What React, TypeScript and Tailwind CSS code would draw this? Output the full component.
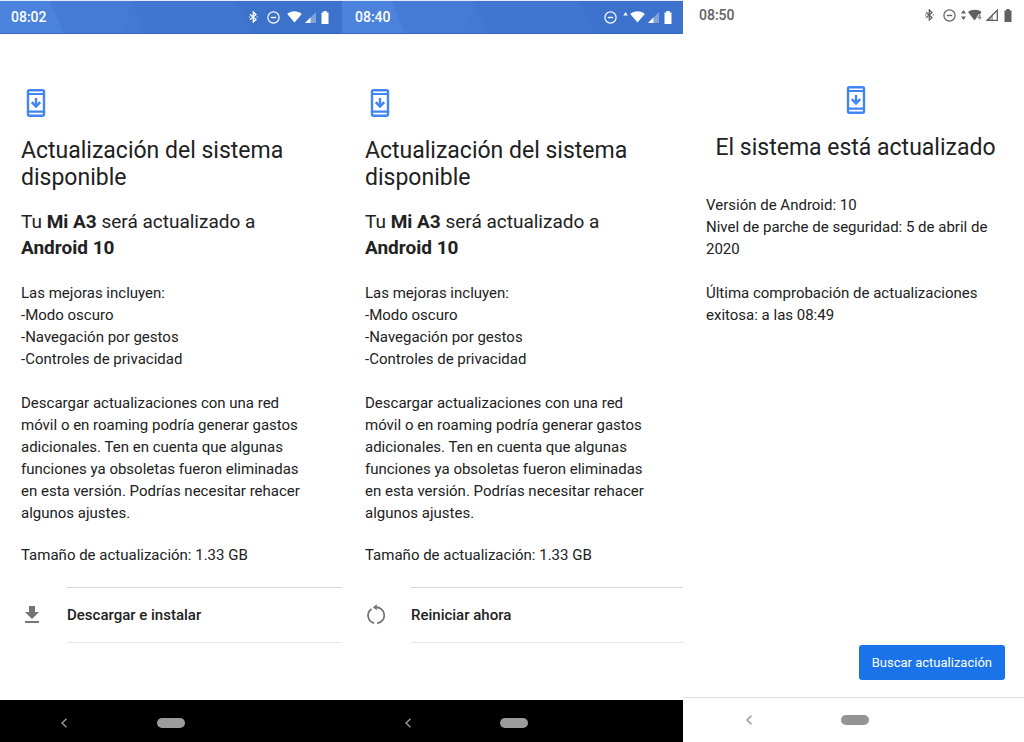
import type { ReactNode } from 'react';

interface StatusBarProps {
  time: string;
  className: string;
  backdrop?: ReactNode;
  children: ReactNode;
}

interface UpdateScreenProps {
  time: string;
  statusClass: string;
  bodyClass: string;
  navClass: string;
  statusIcons: ReactNode;
  actionIcon: ReactNode;
  actionLabel: string;
}

function BluetoothIcon() {
  return (
    <svg width="9" height="12" viewBox="0 0 9 12" fill="none" stroke="currentColor" strokeWidth="1.3">
      <path d="M1 3.2 7 8.6 4.3 11V1L7 3.4 1 8.8" />
      <path d="M0 5.4h1.2v1.2H0zM7.6 5.4h1.2v1.2H7.6z" fill="currentColor" stroke="none" />
    </svg>
  );
}

function DoNotDisturbIcon() {
  return (
    <svg width="13" height="13" viewBox="0 0 13 13" fill="none" stroke="currentColor">
      <circle cx="6.5" cy="6.5" r="5.6" strokeWidth="1.2" />
      <path d="M3.8 6.5h5.4" strokeWidth="1.4" />
    </svg>
  );
}

function WifiIcon() {
  return (
    <svg width="15" height="12" viewBox="0 0 15 12" fill="currentColor">
      <path d="M7.5 11.6.2 3C2.2 1.2 4.8.3 7.5.3s5.3.9 7.3 2.7z" />
    </svg>
  );
}

function SignalIcon() {
  return (
    <svg width="11" height="11" viewBox="0 0 11 11" fill="currentColor">
      <path d="M0 11 11 0v11z" opacity="0.35" />
      <path d="M0 11 5.5 5.5V11z" />
    </svg>
  );
}

function BatteryIcon() {
  return (
    <svg width="8" height="13" viewBox="0 0 8 13" fill="currentColor">
      <path d="M2.3 0h3.4v1.4h1.8V13h-7V1.4h1.8z" />
    </svg>
  );
}

function SystemUpdateIcon() {
  return (
    <svg width="30" height="28" viewBox="0 0 30 28" fill="none" stroke="#4285f4">
      <rect x="7" y="1.2" width="16" height="25.6" rx="1.5" strokeWidth="2.4" />
      <path d="M7 5h16M7 22.6h16" strokeWidth="2.2" />
      <path d="M15 9v8" strokeWidth="2.4" />
      <path d="M10.8 13.2 15 17.4l4.2-4.2" strokeWidth="2.6" />
    </svg>
  );
}

function DownloadIcon() {
  return (
    <svg width="22" height="22" viewBox="0 0 22 22" fill="#757575">
      <path d="M8 2h6v6h4l-7 7-7-7h4zM4 17h14v2H4z" />
    </svg>
  );
}

function RestartIcon() {
  return (
    <svg width="22" height="22" viewBox="0 0 22 22" fill="none" stroke="#757575" strokeWidth="1.8">
      <path d="M6.5 4.9A8 8 0 0 0 9.2 19.2" />
      <path d="M10.5 3.3a8 8 0 0 1 1.5 16" />
      <path d="M11.8.3 7.8 3.3l4 3z" fill="#757575" stroke="none" />
    </svg>
  );
}

function StatusBackdrop() {
  return (
    <svg className="absolute inset-0 h-full w-full" viewBox="0 0 342 34" preserveAspectRatio="none">
      <path d="M0 0h342v34H0z" fill="#4076d0" />
      <path d="M0 0h50l14 34H0z" fill="#4a82dc" />
      <path d="M50 0h83l-10 34H64z" fill="#457bd5" />
      <path d="M133 0l12 34h-22z" fill="#4379d3" />
      <path d="M236 0h106v34h-88z" fill="#3c72cb" />
      <path d="M0 33h342v1H0z" fill="#3567bd" />
      <path d="M0 0h342v1H0z" fill="#e3ebf8" />
    </svg>
  );
}

function StatusBar({ time, className, backdrop, children }: StatusBarProps) {
  return (
    <header className={`relative flex items-center justify-between text-sm font-medium ${className}`}>
      {backdrop}
      <span className="relative">{time}</span>
      <div className="relative flex items-center">{children}</div>
    </header>
  );
}

function NavBar({ className }: { className: string }) {
  return (
    <nav className={`grid grid-cols-[1fr_auto_1fr] items-center ${className}`}>
      <button aria-label="Atrás" className="justify-self-start pl-[60px]">
        <svg width="8" height="10" viewBox="0 0 8 10" fill="none" stroke="currentColor" strokeWidth="1.4">
          <path d="M6.5.8 2 5l4.5 4.2" />
        </svg>
      </button>
      <button aria-label="Inicio" className="h-[10px] w-7 rounded-full bg-current" />
    </nav>
  );
}

function UpdateScreen({
  time,
  statusClass,
  bodyClass,
  navClass,
  statusIcons,
  actionIcon,
  actionLabel,
}: UpdateScreenProps) {
  return (
    <section className="flex flex-col">
      <StatusBar time={time} className={`h-[34px] text-white ${statusClass}`} backdrop={<StatusBackdrop />}>
        {statusIcons}
      </StatusBar>

      <div className={`flex-1 pt-[55px] ${bodyClass}`}>
        <SystemUpdateIcon />
        <h1 className="mt-5 text-[23px] leading-[27px]">
          Actualización del sistema
          <br />
          disponible
        </h1>
        <p className="mt-[18px] text-[19px] leading-[26px]">
          Tu <b>Mi A3</b> será actualizado a
          <br />
          <b>Android 10</b>
        </p>

        <div className="mt-[21px] text-[15px] leading-[22px]">
          <p>Las mejoras incluyen:</p>
          <ul>
            <li>-Modo oscuro</li>
            <li>-Navegación por gestos</li>
            <li>-Controles de privacidad</li>
          </ul>
          <p className="mt-[22px] mr-[30px]">
            Descargar actualizaciones con una red móvil o en roaming podría generar gastos
            adicionales. Ten en cuenta que algunas funciones ya obsoletas fueron eliminadas en
            esta versión. Podrías necesitar rehacer algunos ajustes.
          </p>
          <p className="mt-5">Tamaño de actualización: 1.33 GB</p>
        </div>

        <button className="mt-[21px] flex w-full items-center text-left text-[15px] font-medium">
          <span className="w-[46px]">{actionIcon}</span>
          <span className="flex-1 border-y border-t-[#d8d8d8] border-b-[#e6e6e6] py-4 leading-[22px]">
            {actionLabel}
          </span>
        </button>
      </div>

      <NavBar className={`h-[42px] bg-black pt-1 text-[#9c9c9c] ${navClass}`} />
    </section>
  );
}

function UpToDateScreen() {
  return (
    <section className="flex flex-col">
      <StatusBar time="08:50" className="h-[30px] pr-3 pl-4 text-[#616161]">
        <BluetoothIcon />
        <span className="ml-[9px]">
          <DoNotDisturbIcon />
        </span>
        <svg className="ml-[5px]" width="21" height="12" viewBox="0 0 21 12" fill="currentColor">
          <path d="M2.5 1 5 4.5H0zM2.5 11 5 7.5H0z" />
          <path d="M13.5 11.5 7 3c2-1.5 4.2-2.2 6.8-2.2S19 1.5 20.5 3l-1.6 2.5h-1.6l-1.6 3z" />
          <path d="M19 5.8v4.7M18.8 6l-2 2.8h3.6" fill="none" stroke="currentColor" strokeWidth="0.8" />
        </svg>
        <svg className="ml-[4px]" width="12" height="12" viewBox="0 0 12 12" fill="none" stroke="currentColor">
          <path d="M1.2 11.3 11.3 1.2v10.1z" strokeWidth="1.3" />
          <path d="M1 11.5 7 5.5v6z" fill="currentColor" stroke="none" opacity="0.5" />
        </svg>
        <span className="ml-[6px]">
          <BatteryIcon />
        </span>
      </StatusBar>

      <div className="flex flex-1 flex-col pt-[56px] pr-[19px] pb-[17px] pl-[23px]">
        <div className="flex flex-col items-center">
          <SystemUpdateIcon />
          <h1 className="mt-5 text-[23px] leading-[27px]">El sistema está actualizado</h1>
        </div>
        <div className="mt-[33px] text-[15px] leading-[22px]">
          <p>Versión de Android: 10</p>
          <p>Nivel de parche de seguridad: 5 de abril de 2020</p>
          <p className="mt-[22px]">Última comprobación de actualizaciones exitosa: a las 08:49</p>
        </div>
        <button className="mt-auto h-[35px] self-end rounded-[3px] bg-[#1a73e8] px-[13px] text-[13px] text-white">
          Buscar actualización
        </button>
      </div>

      <NavBar className="h-[45px] border-t border-[#dedede] pl-[2px] text-[#949494]" />
    </section>
  );
}

function App() {
  return (
    <main className="grid min-h-screen grid-cols-[342fr_341fr_341fr] bg-white font-['Roboto',sans-serif] text-[#212121]">
      <UpdateScreen
        time="08:02"
        statusClass="pr-[13px] pl-[11px]"
        bodyClass="pl-[21px]"
        navClass="pl-0"
        actionIcon={<DownloadIcon />}
        actionLabel="Descargar e instalar"
        statusIcons={
          <>
            <BluetoothIcon />
            <span className="ml-[9px]">
              <DoNotDisturbIcon />
            </span>
            <span className="ml-[7px]">
              <WifiIcon />
            </span>
            <span className="ml-[3px]">
              <SignalIcon />
            </span>
            <span className="ml-[5px]">
              <BatteryIcon />
            </span>
          </>
        }
      />
      <UpdateScreen
        time="08:40"
        statusClass="pr-[11px] pl-[13px]"
        bodyClass="pl-[23px]"
        navClass="pl-[2px]"
        actionIcon={<RestartIcon />}
        actionLabel="Reiniciar ahora"
        statusIcons={
          <>
            <DoNotDisturbIcon />
            <svg className="ml-[6px] mr-[2px]" width="5" height="12" viewBox="0 0 5 12" fill="currentColor">
              <path d="M2.5 1 4.8 4.5H.2z" />
            </svg>
            <WifiIcon />
            <span className="ml-[3px]">
              <SignalIcon />
            </span>
            <span className="ml-[5px]">
              <BatteryIcon />
            </span>
          </>
        }
      />
      <UpToDateScreen />
    </main>
  );
}

export default App;
